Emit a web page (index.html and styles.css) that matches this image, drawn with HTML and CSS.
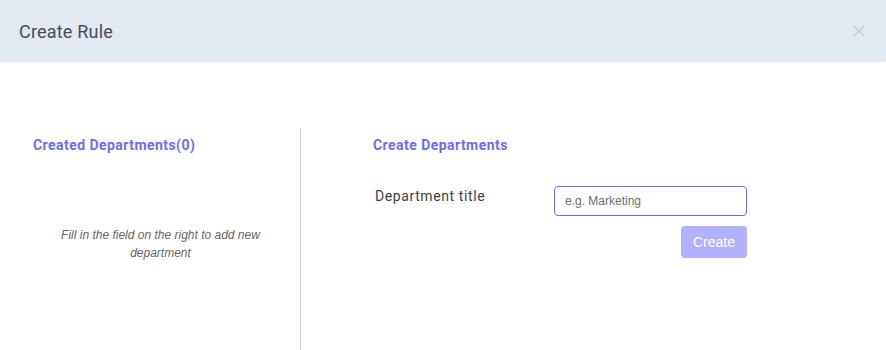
FILE: index.html
```html
<!DOCTYPE html>
<html>
<head>
  <meta charset="utf-8">
  <title>Create Rule</title>
  <link rel="stylesheet" href="styles.css">
</head>
<body>
  <div class="modal">
    <div class="modal-header">
      <h2 class="modal-title">Create Rule</h2>
      <svg class="close" width="12" height="12" viewBox="0 0 12 12">
        <path d="M1 1L11 11M11 1L1 11" stroke="#c4cad1" stroke-width="1.3" fill="none"/>
      </svg>
    </div>
    <div class="modal-body">
      <div class="col-left">
        <h3 class="section-title">Created Departments(0)</h3>
        <p class="empty">Fill in the field on the right to add new department</p>
      </div>
      <div class="col-right">
        <h3 class="section-title">Create Departments</h3>
        <div class="form-row">
          <label class="label">Department title</label>
          <input class="input" type="text" placeholder="e.g. Marketing" autofocus>
        </div>
        <div class="actions">
          <button class="btn">Create</button>
        </div>
      </div>
    </div>
  </div>
</body>
</html>
```
FILE: styles.css
```css
* {
  margin: 0;
  padding: 0;
  box-sizing: border-box;
}
body {
  font-family: Roboto, "Liberation Sans", Arial, sans-serif;
  background: #fff;
}
.modal-header {
  height: 62px;
  background: #e2e9f0;
  display: flex;
  align-items: center;
  justify-content: space-between;
  padding: 0 19px;
}
.modal-title {
  font-size: 18px;
  font-weight: 400;
  color: #454d56;
  letter-spacing: 0.2px;
}
.close {
  margin-right: 2px;
  margin-top: -1px;
}
.modal-body {
  display: flex;
  padding-top: 66px;
  height: 288px;
}
.col-left {
  width: 301px;
  border-right: 1px solid #c8cfd8;
  padding: 9px 0 0 33px;
}
.section-title {
  font-size: 14px;
  font-weight: 700;
  color: #6c6cf5;
  line-height: 17px;
  letter-spacing: 0.45px;
}
.empty {
  margin-top: 72px;
  width: 255px;
  text-align: center;
  font-family: "Liberation Sans", Arial, sans-serif;
  font-style: italic;
  font-size: 12px;
  line-height: 18px;
  color: #666;
}
.col-right {
  padding: 9px 0 0 72px;
}
.form-row {
  display: flex;
  align-items: flex-start;
  margin-top: 32px;
}
.label {
  width: 181px;
  padding: 2px 0 0 2px;
  font-size: 14px;
  color: #3a3f45;
  letter-spacing: 0.6px;
}
.input {
  width: 193px;
  height: 30px;
  border: 1px solid #6b67f5;
  border-radius: 4px;
  padding: 0 10px;
  font-family: "Liberation Sans", Arial, sans-serif;
  font-size: 12px;
  color: #333;
  outline: none;
}
.input::placeholder {
  color: #6e6e6e;
}
.actions {
  display: flex;
  justify-content: flex-end;
  margin-top: 10px;
}
.btn {
  width: 66px;
  height: 32px;
  border: none;
  border-radius: 4px;
  background: #b3b0fd;
  color: #fff;
  font-family: "Liberation Sans", Arial, sans-serif;
  font-size: 14px;
}
```
